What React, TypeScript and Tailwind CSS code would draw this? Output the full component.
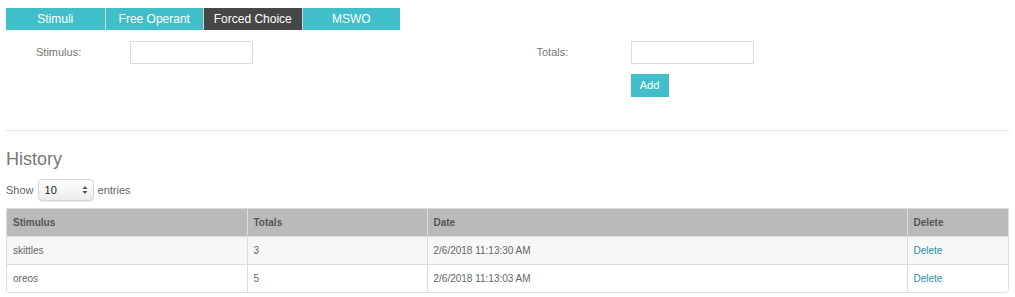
const tabs = ['Stimuli', 'Free Operant', 'Forced Choice', 'MSWO'];

const rows = [
  { stimulus: 'skittles', totals: '3', date: '2/6/2018 11:13:30 AM' },
  { stimulus: 'oreos', totals: '5', date: '2/6/2018 11:13:03 AM' },
];

function Field({ label }: { label: string }) {
  return (
    <div className="flex items-start">
      <label className="w-[124px] pl-[30px] pt-[3px] text-[11px] text-[#777]">{label}</label>
      <input className="block h-[23px] w-[123px] border border-[#dcdcdc] bg-white outline-none" />
    </div>
  );
}

export default function App() {
  return (
    <div className="min-h-[297px] bg-white px-[6px] pt-[8px] font-['Liberation_Sans',Arial,sans-serif]">
      <div className="flex">
        {tabs.map((tab, i) => (
          <div
            key={tab}
            className={
              'flex h-[22px] w-[98.5px] items-center justify-center text-[12px] text-white ' +
              (i > 0 ? 'border-l border-[#d4d4d4] ' : '') +
              (tab === 'Forced Choice' ? 'bg-[#474747]' : 'bg-[#40bfca]')
            }
          >
            {tab}
          </div>
        ))}
      </div>

      <div className="mt-[11px] grid grid-cols-2">
        <Field label="Stimulus:" />
        <div className="-ml-px">
          <Field label="Totals:" />
          <div className="mt-[10px] flex pl-[124px]">
            <button className="block h-[23px] w-[38px] bg-[#40bfca] text-[11px] text-white">Add</button>
          </div>
        </div>
      </div>

      <hr className="mt-[33px] border-[#e2e2e2]" />

      <h2 className="mt-[17px] text-[18px] leading-[22px] text-[#777]">History</h2>

      <div className="mt-[9px] flex items-center gap-[4px] text-[11px] text-[#666]">
        <span>Show</span>
        <div className="flex h-[22px] w-[56px] items-center justify-between rounded-[4px] border border-[#d6d6d6] bg-gradient-to-b from-white to-[#ececec] pl-[6px] pr-[5px] text-[11px] text-[#222] shadow-[0_1px_1px_rgba(0,0,0,0.08)]">
          <span>10</span>
          <svg width="6" height="10" viewBox="0 0 6 10">
            <path d="M0.5 4 L3 1 L5.5 4 Z" fill="#555" />
            <path d="M0.5 6 L3 9 L5.5 6 Z" fill="#555" />
          </svg>
        </div>
        <span>entries</span>
      </div>

      <div className="mt-[7px] overflow-hidden rounded-br-[4px] rounded-bl-[2px] border border-[#dcdcdc]">
        <table className="w-full border-collapse text-[10px]">
          <thead>
            <tr className="h-[27px] bg-[#b9bab9] text-left font-bold text-[#555]">
              <th className="w-[240px] border-r border-[#dcdcdc] pl-[6px]">Stimulus</th>
              <th className="w-[180px] border-r border-[#dcdcdc] pl-[6px]">Totals</th>
              <th className="w-[480px] border-r border-[#dcdcdc] pl-[6px]">Date</th>
              <th className="pl-[6px]">Delete</th>
            </tr>
          </thead>
          <tbody>
            {rows.map((row, i) => (
              <tr
                key={row.stimulus}
                className={'h-[28px] border-t border-[#dcdcdc] text-[#666] ' + (i === 0 ? 'bg-[#f7f7f7]' : 'bg-white')}
              >
                <td className="border-r border-[#dcdcdc] pl-[6px]">{row.stimulus}</td>
                <td className="border-r border-[#dcdcdc] pl-[6px]">{row.totals}</td>
                <td className="border-r border-[#dcdcdc] pl-[6px]">{row.date}</td>
                <td className="pl-[6px] text-[#2b8fab]">Delete</td>
              </tr>
            ))}
          </tbody>
        </table>
      </div>
    </div>
  );
}
